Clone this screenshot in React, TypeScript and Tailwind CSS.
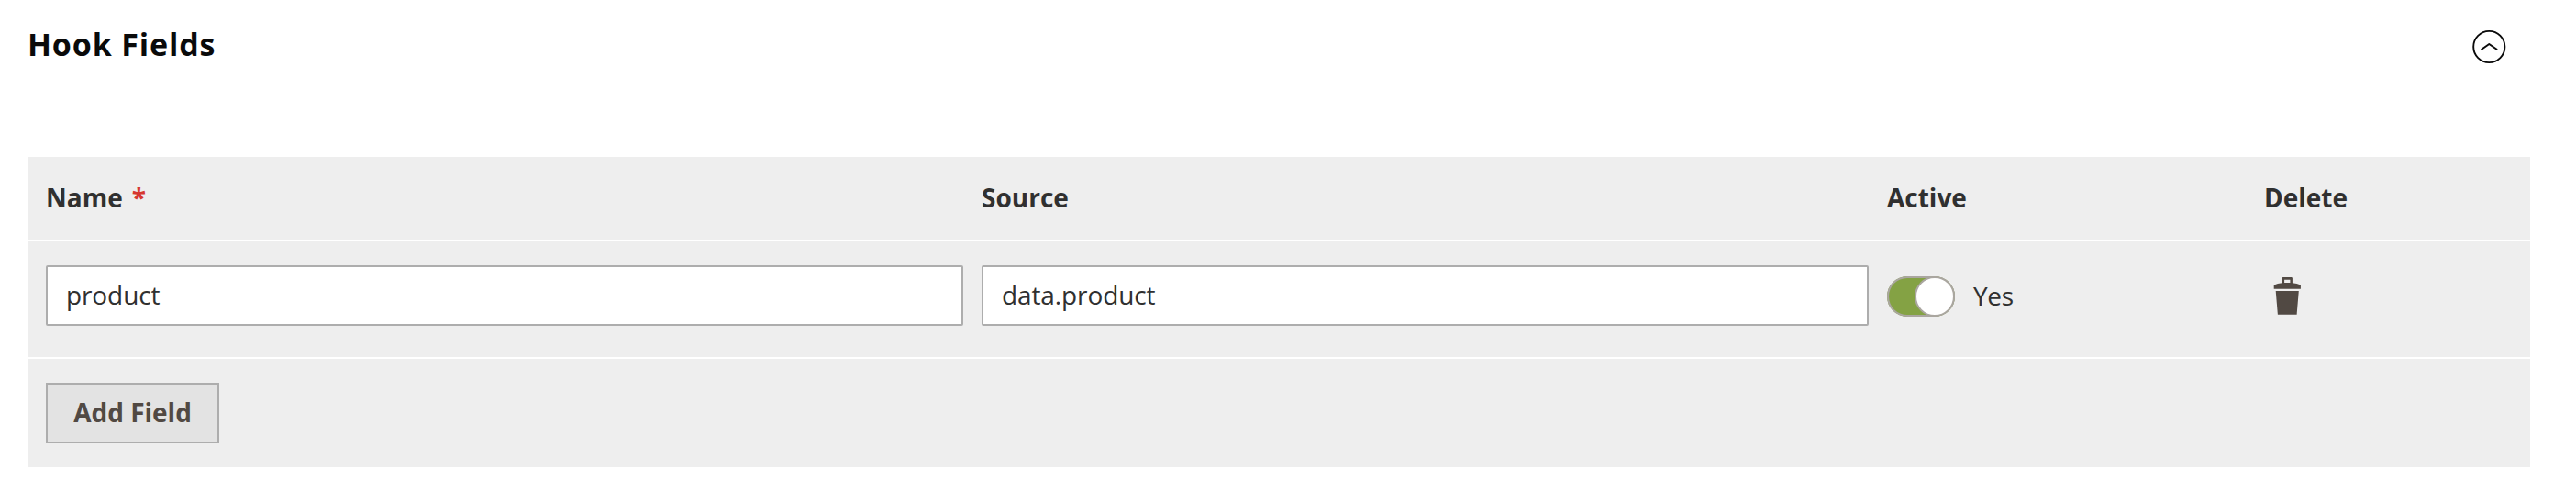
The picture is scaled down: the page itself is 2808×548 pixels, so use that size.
import React, { useState } from "react";

const COLUMNS = "grid grid-cols-[1000px_967px_391px_1fr] gap-x-5 px-5";

function CollapseIcon() {
  return (
    <svg width="38" height="38" viewBox="0 0 38 38" fill="none" stroke="#0a0a0a">
      <circle cx="19.300" cy="19" r="17.100" strokeWidth="1.900" />
      <path d="M11.100 21.800 19.300 16l8.300 5.800" strokeWidth="2" strokeLinecap="round" strokeLinejoin="round" />
    </svg>
  );
}

function TrashIcon() {
  return (
    <svg width="30" height="42" viewBox="0 0 30 42" fill="#514943">
      <path
        fillRule="evenodd"
        d="M9.600 7.300V2.200Q9.600 1 10.800 1h8.900q1.200 0 1.200 1.200v5.100q5 .6 9 2.200v4.300H.7V9.500Q4.700 7.900 9.600 7.300ZM12.100 7h6.300V3.700h-6.300Z"
      />
      <path d="M2.700 16h25.100l-2.200 25.700H4.900Z" />
    </svg>
  );
}

function TextField({ label, initial }: { label: string; initial: string }) {
  const [value, setValue] = useState(initial);
  return (
    <input
      aria-label={label}
      value={value}
      onChange={(e) => setValue(e.target.value)}
      className="h-[66px] w-full rounded-[2px] border-2 border-[#adadad] bg-white px-5 pb-[2px] text-[28px] tracking-[-0.1px] text-[#303030] outline-none"
    />
  );
}

export default function App() {
  const [active, setActive] = useState(true);
  return (
    <main className="h-[548px] w-full bg-white pr-[50px] pl-[30px] font-['Open_Sans',sans-serif] text-[28px] text-[#303030]">
      <header className="flex h-[171px] items-start justify-between pr-[26px]">
        <h2 className="pt-[24px] text-[34px] leading-[48px] font-bold tracking-[0.85px] text-[#0a0a0a]">Hook Fields</h2>
        <button className="mt-8">
          <CollapseIcon />
        </button>
      </header>

      <section className="flex flex-col gap-[2px]">
        <div className={`${COLUMNS} h-[90px] items-center bg-[#eee] pb-[2px] font-bold`}>
          <div className="flex gap-[10px]">
            Name <span className="text-[#d6382f]">*</span>
          </div>
          <div>Source</div>
          <div>Active</div>
          <div>Delete</div>
        </div>

        <div className={`${COLUMNS} h-[126px] items-start bg-[#eee] pt-[26px]`}>
          <TextField label="Name" initial="product" />
          <TextField label="Source" initial="data.product" />
          <div className="flex h-[68px] items-center gap-5">
            <button
              onClick={() => setActive(!active)}
              className={`flex h-11 w-[74px] rounded-full shadow-[inset_0_0_0_2px_#aaa6a0] ${active ? "justify-end bg-[#84a244]" : "justify-start bg-[#e3e3e3]"}`}
            >
              <span className="size-11 rounded-full border-2 border-[#aaa6a0] bg-white" />
            </button>
            <span className="pb-[2px] tracking-[-0.3px]">{active ? "Yes" : "No"}</span>
          </div>
          <button className="mt-[12px] ml-[10px] justify-self-start">
            <TrashIcon />
          </button>
        </div>

        <div className="flex h-[118px] items-center bg-[#eee] px-5">
          <button className="h-[66px] w-[189px] border-2 border-[#adadad] bg-[#e3e3e3] pb-[2px] font-bold text-[#514943]">
            Add Field
          </button>
        </div>
      </section>
    </main>
  );
}
